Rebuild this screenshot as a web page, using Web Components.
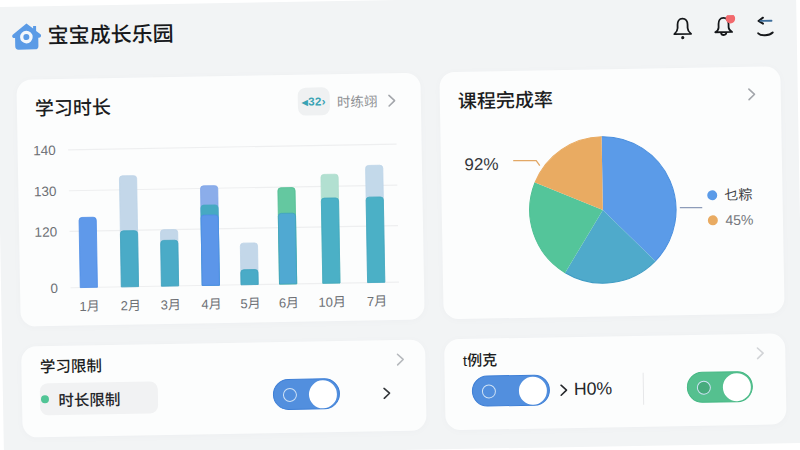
<!DOCTYPE html>
<html lang="zh">
<head>
<meta charset="utf-8">
<title>宝宝成长乐园</title>
<style>
  html, body { margin: 0; width: 800px; height: 450px; overflow: hidden; background: #fff; }
</style>
</head>
<body>
<baby-app>
  <top-bar slot="top" title="宝宝成长乐园"></top-bar>

  <info-card slot="chart" heading="学习时长" size="19">
    <study-chip slot="action"></study-chip>
    <bar-chart></bar-chart>
  </info-card>

  <info-card slot="pie" heading="课程完成率" size="19">
    <pie-chart></pie-chart>
  </info-card>

  <info-card slot="limit" heading="学习限制" size="15.5" compact>
    <limit-row></limit-row>
  </info-card>

  <info-card slot="check" heading="t例克" size="15" compact faint>
    <check-row></check-row>
  </info-card>
</baby-app>

<script>
const FONT = '"Liberation Sans", "Noto Sans CJK SC", sans-serif';

// Whole screen sits tilted by one degree, the white page shows in the corners
class BabyApp extends HTMLElement {
    constructor() {
        super();
        this.attachShadow({ mode: 'open' });
        this.shadowRoot.innerHTML = `
            <style>
                :host {
                    display: block;
                    width: 800px;
                    height: 450px;
                    box-sizing: border-box;
                    background: #f2f4f5;
                    transform: rotate(-1deg);
                    font-family: ${FONT};
                }
                .grid {
                    display: grid;
                    grid-template-columns: 404px 341.3px;
                    grid-template-rows: 247px 91px;
                    column-gap: 19px;
                    row-gap: 19.5px;
                    padding: 0 0 0 18.5px;
                }
            </style>
            <slot name="top"></slot>
            <div class="grid">
                <slot name="chart"></slot>
                <slot name="pie"></slot>
                <slot name="limit"></slot>
                <slot name="check"></slot>
            </div>
        `;
    }
}

class TopBar extends HTMLElement {
    constructor() {
        super();
        this.attachShadow({ mode: 'open' });
        const title = this.getAttribute('title') || '';
        this.shadowRoot.innerHTML = `
            <style>
                :host {
                    display: flex;
                    align-items: center;
                    height: 73px;
                    box-sizing: border-box;
                    padding: 0 19.5px 13px 15px;
                }
                h1 {
                    margin: 0 0 0 6px;
                    font-size: 21px;
                    line-height: 28px;
                    font-weight: 500;
                    color: #17191c;
                }
                .icons {
                    margin-left: auto;
                    display: flex;
                    gap: 17.5px;
                    padding-top: 5px;
                }
                svg { display: block; }
            </style>
            <svg width="30" height="28" viewBox="0 0 30 28">
                <path d="M15 1 L21.6 6.2 V3.6 H24.6 V8.6 L28.6 11.8 C30.2 13.2 29.4 15.4 27.4 15.4 H26.6 V23.6 A3.4 3.4 0 0 1 23.2 27 H6.8 A3.4 3.4 0 0 1 3.4 23.6 V15.4 H2.6 C.6 15.4 -.2 13.2 1.4 11.8 Z" fill="#5b9be6"/>
                <circle cx="14.7" cy="14.6" r="6.3" fill="#f3f7fc"/>
                <circle cx="14.7" cy="14.6" r="3" fill="#5b9be6"/>
            </svg>
            <h1>${title}</h1>
            <div class="icons">
                <svg width="24" height="24" viewBox="0 0 24 24" fill="none" stroke="#15171a" stroke-width="1.8" stroke-linecap="round" stroke-linejoin="round">
                    <path d="M12 2.5 C8.6 2.5 7 5.4 7 8.5 V12 C7 14.6 5.6 16.2 3.6 18 H20.4 C18.4 16.2 17 14.6 17 12 V8.5 C17 5.4 15.4 2.5 12 2.5 Z"/>
                    <circle cx="12" cy="21.6" r=".7" fill="#15171a"/>
                </svg>
                <svg width="24" height="24" viewBox="0 0 24 24" fill="none" stroke="#15171a" stroke-width="1.8" stroke-linecap="round" stroke-linejoin="round">
                    <path d="M12 2.5 C8.6 2.5 7 5.4 7 8.5 V12 C7 14.4 5.8 15.4 3.6 16.8 H20.4 C18.2 15.4 17 14.4 17 12 V8.5 C17 5.4 15.4 2.5 12 2.5 Z"/>
                    <path d="M9.4 17.5 C9.6 20.4 14.4 20.4 14.6 17.5"/>
                    <circle cx="19" cy="3.4" r="4.8" fill="#f2696d" stroke="none"/>
                </svg>
                <svg width="24" height="24" viewBox="0 0 24 24" fill="none" stroke-width="1.9" stroke-linecap="round" stroke-linejoin="round">
                    <path d="M9.5 3 L5 6.2 L9.5 9" stroke="#15171a"/>
                    <path d="M7 6.2 H18" stroke="#3f6f9c"/>
                    <path d="M4.5 18.6 C7 21.4 15.5 21.4 19 18" stroke="#15171a"/>
                </svg>
            </div>
        `;
    }
}

class InfoCard extends HTMLElement {
    constructor() {
        super();
        this.attachShadow({ mode: 'open' });
        const heading = this.getAttribute('heading') || '';
        const size = this.getAttribute('size') || '19';
        const compact = this.hasAttribute('compact');
        const faint = this.hasAttribute('faint');
        const chevron = faint ? '#d2d4d7' : (compact ? '#b6b9bd' : '#a3a6ab');
        this.shadowRoot.innerHTML = `
            <style>
                :host {
                    display: block;
                    background: #fcfdfd;
                    border-radius: 15px;
                    box-shadow: 0 1px 6px rgba(120, 130, 145, .04);
                    overflow: hidden;
                }
                header {
                    display: flex;
                    align-items: center;
                    height: ${compact ? 36 : 54}px;
                    padding: ${compact ? '4px 21px 0 19px' : '0 25px 0 18.5px'};
                    box-sizing: border-box;
                }
                h2 {
                    margin: ${compact ? (faint ? '2px' : '-2px') : '0'} 0 0;
                    font-size: ${size}px;
                    font-weight: 500;
                    color: #1c1e22;
                }
                .action {
                    margin-left: auto;
                    display: flex;
                    align-items: center;
                    gap: 10px;
                }
            </style>
            <header>
                <h2>${heading}</h2>
                <div class="action">
                    <slot name="action"></slot>
                    <svg width="8" height="13" viewBox="0 0 8 13" fill="none" stroke="${chevron}" stroke-width="1.6" stroke-linecap="round" stroke-linejoin="round"><path d="M1.2 1.2 L6.8 6.5 L1.2 11.8"/></svg>
                </div>
            </header>
            <slot></slot>
        `;
    }
}

class StudyChip extends HTMLElement {
    constructor() {
        super();
        this.attachShadow({ mode: 'open' });
        this.shadowRoot.innerHTML = `
            <style>
                :host { display: flex; align-items: center; gap: 7px; }
                .badge {
                    width: 32px;
                    height: 28px;
                    border-radius: 8px;
                    background: #eff1f2;
                    color: #38a3b4;
                    font-size: 11.5px;
                    font-weight: 700;
                    letter-spacing: .3px;
                    line-height: 28px;
                    text-align: center;
                    white-space: nowrap;
                }
                .label { font-size: 13.5px; color: #8e9093; }
            </style>
            <span class="badge">◂32›</span>
            <span class="label">时练翊</span>
        `;
    }
}

class BarChart extends HTMLElement {
    constructor() {
        super();
        this.attachShadow({ mode: 'open' });
    }

    connectedCallback() {
        this.render();
    }

    render() {
        // numbers are page y positions, minus the offset of the svg in the page
        const ox = 18.5, oy = 127, base = 282;
        const ticks = [['140', 144], ['130', 185], ['120', 225.6], ['0', 282]];
        const bars = [
            { x: 87.3, label: '1月', parts: [[211.9, '#5f99ea', '#4d8de6']] },
            { x: 128.4, label: '2月', parts: [[171, '#c3d7e9', '#bdd3e7'], [226, '#4aabc7', '#3fa3be']] },
            { x: 168.5, label: '3月', parts: [[225.6, '#c3d7e9', '#bdd3e7'], [236.3, '#4aabc7', '#3fa3be']] },
            { x: 209.3, label: '4月', parts: [[182.4, '#8badea', '#7fa6e8'], [201.7, '#46a9c2', '#46a9c2'], [211.7, '#5c96e9', '#4d8de6']] },
            { x: 248.1, label: '5月', parts: [[240.4, '#c3d7e9', '#bdd3e7'], [267, '#4aabc7', '#3fa3be']] },
            { x: 286.6, label: '6月', parts: [[185.7, '#64c8a0', '#50bd92'], [211.3, '#50a9d2', '#3fa3be']] },
            { x: 329.9, label: '10月', parts: [[173.1, '#b2e0d1', '#aeddcd'], [196.8, '#4bb0c6', '#3fa8be']] },
            { x: 374.7, label: '7月', parts: [[164.9, '#c3d9ea', '#bdd5e8'], [196.6, '#4bb0c6', '#3fa8be']] }
        ];
        const grid = ticks.map(([t, v]) => `
            <line x1="${69 - ox}" x2="${397.5 - ox}" y1="${v - oy}" y2="${v - oy}" stroke="#eeeff0" stroke-width="1.2"/>
            <text x="${56.5 - ox}" y="${v - oy + 4.8}" text-anchor="end" font-size="13.5" fill="#6d7075">${t}</text>`).join('');
        const cols = bars.map(b => {
            const rects = b.parts.map(([top, fill, line]) => `
                <path d="M${b.x - 8.6 - ox} ${base - oy} V${top - oy + 3} Q${b.x - 8.6 - ox} ${top - oy} ${b.x - 5.6 - ox} ${top - oy} H${b.x + 5.6 - ox} Q${b.x + 8.6 - ox} ${top - oy} ${b.x + 8.6 - ox} ${top - oy + 3} V${base - oy} Z" fill="${fill}" stroke="${line}" stroke-width=".8"/>`).join('');
            return rects + `<text x="${b.x + 0.5 - ox}" y="${300.6 - oy + 4.8}" text-anchor="middle" font-size="13" fill="#6d7075">${b.label}</text>`;
        }).join('');
        this.shadowRoot.innerHTML = `
            <style>
                :host { display: block; }
                svg { display: block; font-family: ${FONT}; }
            </style>
            <svg width="404" height="193" viewBox="0 0 404 193">${grid}${cols}</svg>
        `;
    }
}

class PieChart extends HTMLElement {
    constructor() {
        super();
        this.attachShadow({ mode: 'open' });
    }

    connectedCallback() {
        this.render();
    }

    point(deg, r) {
        const a = deg * Math.PI / 180;
        return [161.1 + r * Math.sin(a), 86.5 - r * Math.cos(a)];
    }

    render() {
        const r = 73.2;
        const slices = [
            [0, 135.3, '#5b9be8', '#4a8fde'],
            [135.3, 212, '#4faacb', '#3f9cc4'],
            [212, 293, '#54c59a', '#4fc094'],
            [293, 360, '#e9ab62', '#e9ab62']
        ];
        const paths = slices.map(([a, b, fill, edge]) => {
            const [x1, y1] = this.point(a, r);
            const [x2, y2] = this.point(b, r);
            const big = b - a > 180 ? 1 : 0;
            return `<path d="M161.1 86.5 L${x1} ${y1} A${r} ${r} 0 ${big} 1 ${x2} ${y2} Z" fill="${fill}"/>
                    <path d="M${x1} ${y1} A${r} ${r} 0 ${big} 1 ${x2} ${y2}" fill="none" stroke="${edge}" stroke-width="1"/>`;
        }).join('');
        this.shadowRoot.innerHTML = `
            <style>
                :host { display: block; }
                svg { display: block; font-family: ${FONT}; }
            </style>
            <svg width="341" height="193" viewBox="0 0 341 193">
                ${paths}
                <text x="23.5" y="44.4" font-size="17" fill="#33363a">92%</text>
                <path d="M72.3 35.7 L95.3 36.1 L98.8 41.1" fill="none" stroke="#e2a866" stroke-width="1.3"/>
                <line x1="238.1" y1="85.6" x2="260.5" y2="86" stroke="#8d9cb9" stroke-width="1.3"/>
                <circle cx="270.7" cy="73.7" r="5" fill="#5b9be8"/>
                <text x="283" y="78.7" font-size="14" fill="#3c3f44">乜粽</text>
                <circle cx="270.9" cy="98.8" r="5" fill="#e9ab62"/>
                <text x="283.5" y="103.8" font-size="14" fill="#74777c">45%</text>
            </svg>
        `;
    }
}

class SwitchToggle extends HTMLElement {
    constructor() {
        super();
        this.attachShadow({ mode: 'open' });
        const color = this.getAttribute('color') || '#528fde';
        const line = this.getAttribute('line') || '#3e7fd6';
        const width = this.getAttribute('width') || '66';
        const dot = this.getAttribute('dot') || 'none';
        this.shadowRoot.innerHTML = `
            <style>
                :host {
                    display: flex;
                    align-items: center;
                    width: ${width}px;
                    height: 31px;
                    box-sizing: border-box;
                    border: 1.3px solid ${line};
                    border-radius: 16px;
                    background: ${color};
                    padding: 0 1.5px 0 9px;
                }
                .ring {
                    width: 12px;
                    height: 12px;
                    border-radius: 50%;
                    border: 1.2px solid #cfe2f5;
                    background: ${dot};
                }
                .knob {
                    margin-left: auto;
                    width: 28px;
                    height: 28px;
                    border-radius: 50%;
                    background: #fff;
                }
            </style>
            <span class="ring"></span>
            <span class="knob"></span>
        `;
    }
}

class LimitRow extends HTMLElement {
    constructor() {
        super();
        this.attachShadow({ mode: 'open' });
        this.shadowRoot.innerHTML = `
            <style>
                :host {
                    display: flex;
                    align-items: center;
                    padding: 0 0 0 18px;
                    height: 34px;
                }
                .pill {
                    display: flex;
                    align-items: center;
                    width: 118px;
                    height: 32px;
                    box-sizing: border-box;
                    padding-left: 1.5px;
                    border-radius: 8px;
                    background: #f1f2f3;
                }
                i {
                    width: 8px;
                    height: 8px;
                    border-radius: 50%;
                    background: #51c596;
                }
                span {
                    margin-left: 9.5px;
                    font-size: 15.5px;
                    font-weight: 500;
                    color: #24262a;
                }
                switch-toggle { margin-left: 115px; }
                svg { margin-left: 43px; }
            </style>
            <div class="pill"><i></i><span>时长限制</span></div>
            <switch-toggle width="67"></switch-toggle>
            <svg width="8" height="12" viewBox="0 0 8 12" fill="none" stroke="#33363a" stroke-width="1.6" stroke-linecap="round" stroke-linejoin="round"><path d="M1.2 1 L6.6 6 L1.2 11"/></svg>
        `;
    }
}

class CheckRow extends HTMLElement {
    constructor() {
        super();
        this.attachShadow({ mode: 'open' });
        this.shadowRoot.innerHTML = `
            <style>
                :host {
                    display: flex;
                    align-items: center;
                    padding: 0 0 0 27px;
                    height: 34px;
                }
                svg { margin-left: 10px; }
                span {
                    margin-left: 6.5px;
                    font-size: 17.7px;
                    color: #24262a;
                }
                .rule {
                    margin-left: 30.5px;
                    width: 1px;
                    height: 32px;
                    background: #e6e7e9;
                }
                .last { margin-left: 43.5px; }
            </style>
            <switch-toggle width="78"></switch-toggle>
            <svg width="8" height="12" viewBox="0 0 8 12" fill="none" stroke="#26282c" stroke-width="1.6" stroke-linecap="round" stroke-linejoin="round"><path d="M1.2 1 L6.6 6 L1.2 11"/></svg>
            <span>H0%</span>
            <div class="rule"></div>
            <switch-toggle class="last" width="66" color="#55c08f" line="#45b884" dot="#47ab7d"></switch-toggle>
        `;
    }
}

customElements.define('baby-app', BabyApp);
customElements.define('top-bar', TopBar);
customElements.define('info-card', InfoCard);
customElements.define('study-chip', StudyChip);
customElements.define('bar-chart', BarChart);
customElements.define('pie-chart', PieChart);
customElements.define('switch-toggle', SwitchToggle);
customElements.define('limit-row', LimitRow);
customElements.define('check-row', CheckRow);
</script>
</body>
</html>
